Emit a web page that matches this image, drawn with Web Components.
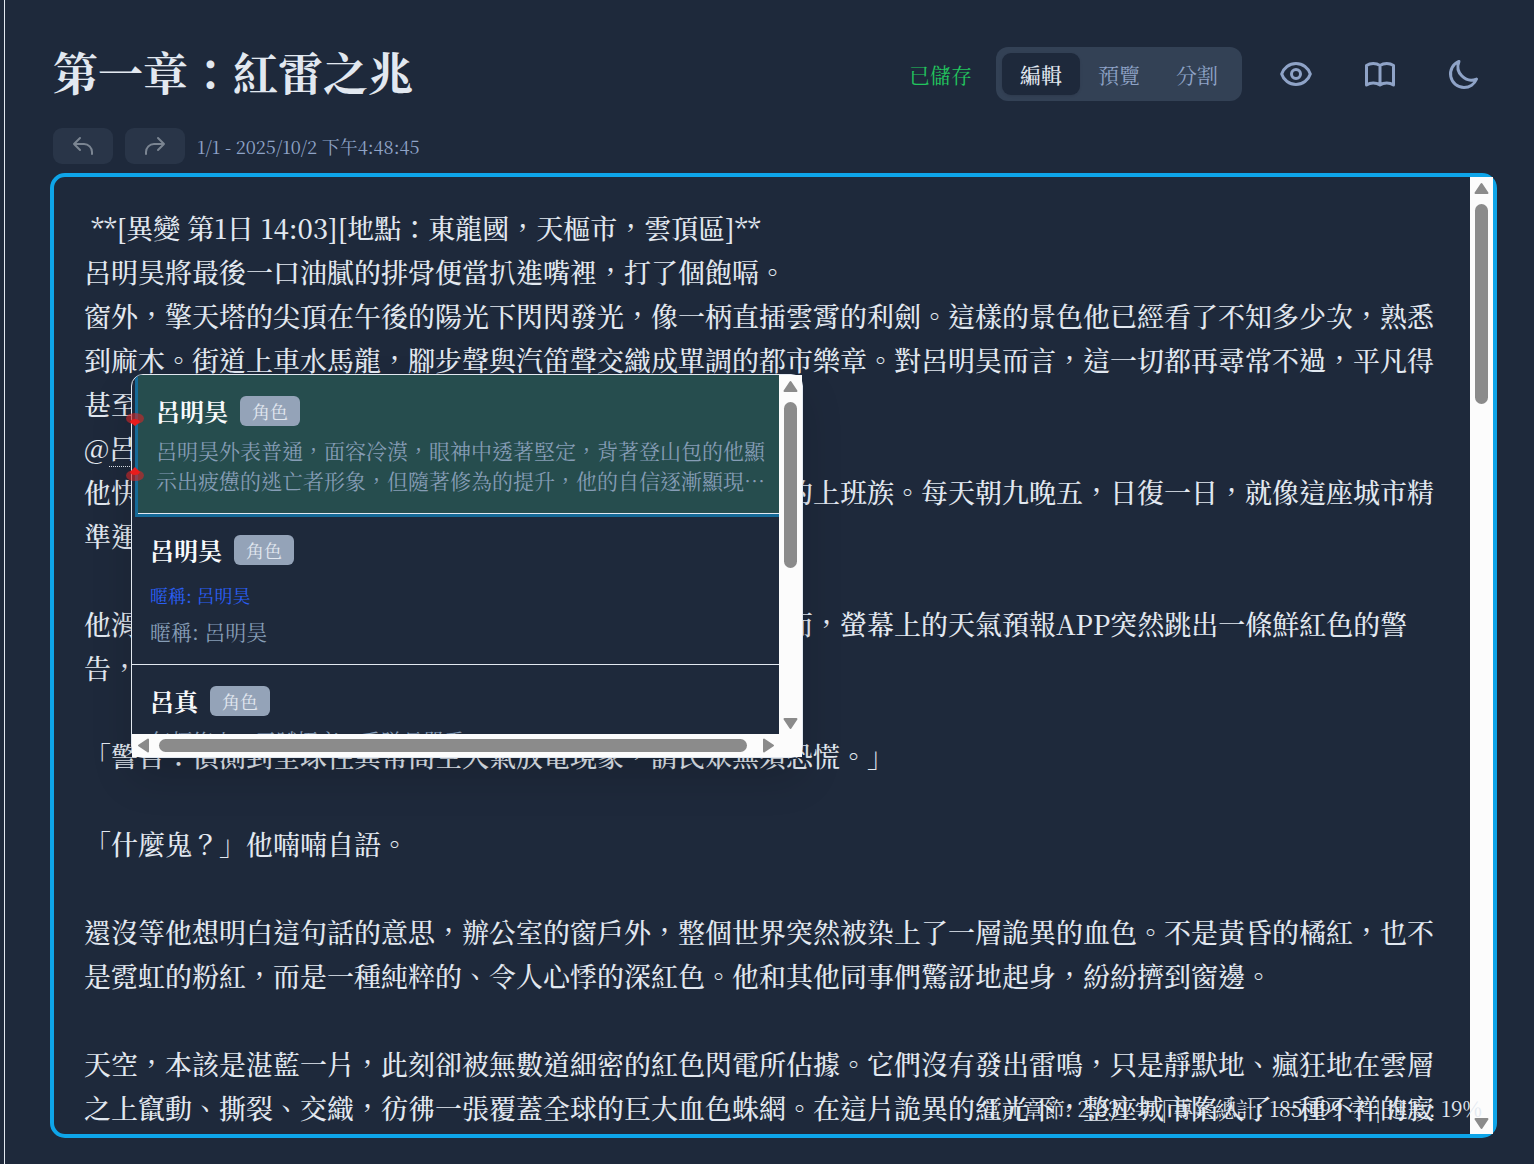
<!DOCTYPE html>
<html lang="zh-Hant">
<head>
<meta charset="utf-8">
<meta name="viewport" content="width=device-width, initial-scale=1">
<title>第一章:紅雷之兆</title>
<style>
    :root {
        --bg: #1e293b;
        --surface: #334155;
        --text: #e2e8f0;
        --muted: #8fa3c7;
        --badge: #94a3b8;
        --accent: #0ea5e9;
        --rail: #fcfcfc;
        --thumb: #8b8b8b;
    }
    body {
        margin: 0;
        background: var(--bg);
        color: var(--text);
        font-family: 'Noto Serif CJK TC', 'Noto Serif TC', 'Liberation Serif', 'Noto Sans CJK TC', serif;
    }
</style>
</head>
<body>
<chapter-page>
    <chapter-header slot="header" heading="第一章：紅雷之兆" status="已儲存"></chapter-header>
    <history-bar slot="history">1/1 - 2025/10/2 下午4:48:45</history-bar>
    <chapter-editor>
        <mention-popup slot="popup">
            <mention-item selected name="呂明昊" kind="角色">呂明昊外表普通，面容冷漠，眼神中透著堅定，背著登山包的他顯示出疲憊的逃亡者形象，但隨著修為的提升，他的自信逐漸顯現…</mention-item>
            <mention-item name="呂明昊" kind="角色" nickname="暱稱: 呂明昊">暱稱: 呂明昊</mention-item>
            <mention-item name="呂真" kind="角色">年輕修士，天賦極高，受隊長器重</mention-item>
        </mention-popup>
        <span slot="stats">當前章節: 2,031 字 | 專案總計: 185,199 字 | 進度: 19%</span>
    </chapter-editor>
</chapter-page>

<script>
/**
 * Small helper, attaches an open shadow root with the given markup
 */
function render(element, html) {
    element.attachShadow({ mode: 'open' }).innerHTML = html;
}

class ChapterPage extends HTMLElement {
    constructor() {
        super();
        render(this, `
            <style>
                :host {
                    box-sizing: border-box;
                    display: flex;
                    flex-direction: column;
                    min-height: 100vh;
                    margin-left: 4px;
                    padding: 47px 40px 26px 48px;
                    border-left: 1px solid var(--text);
                }
                slot[name="history"] {
                    display: block;
                    margin: 27px 0 9px;
                }
            </style>
            <slot name="header"></slot>
            <slot name="history"></slot>
            <slot></slot>
        `);
    }
}

class ChapterHeader extends HTMLElement {
    constructor() {
        super();
        render(this, `
            <style>
                :host {
                    display: flex;
                    align-items: flex-start;
                    justify-content: space-between;
                }
                h1 {
                    margin: 0;
                    font-size: 45px;
                    line-height: 50px;
                    font-weight: 700;
                }
                .actions {
                    display: flex;
                    align-items: center;
                    gap: 24px;
                }
                .status {
                    color: #22c55e;
                    font-size: 21px;
                    line-height: 30px;
                }
                .modes {
                    display: flex;
                    padding: 6px;
                    border-radius: 12px;
                    background: var(--surface);
                }
                button {
                    border: 0;
                    padding: 0;
                    background: none;
                    color: var(--muted);
                    font: inherit;
                    cursor: pointer;
                }
                .modes button {
                    padding: 6px 18px;
                    border-radius: 9px;
                    font-size: 21px;
                    line-height: 30px;
                }
                .modes button[aria-pressed="true"] {
                    background: var(--bg);
                    color: var(--text);
                    font-weight: 500;
                    box-shadow: 0 1px 3px rgba(0, 0, 0, 0.1);
                }
                .icon {
                    display: flex;
                    padding: 9px 12px;
                }
                svg {
                    width: 36px;
                    height: 36px;
                    fill: none;
                    stroke: currentColor;
                    stroke-width: 2;
                    stroke-linecap: round;
                    stroke-linejoin: round;
                }
            </style>
            <h1></h1>
            <div class="actions">
                <span class="status"></span>
                <div class="modes">
                    <button type="button" aria-pressed="true">編輯</button>
                    <button type="button" aria-pressed="false">預覽</button>
                    <button type="button" aria-pressed="false">分割</button>
                </div>
                <button type="button" class="icon" aria-label="專注模式">
                    <svg viewBox="0 0 24 24"><path d="M15 12a3 3 0 11-6 0 3 3 0 016 0z"/><path d="M2.458 12C3.732 7.943 7.523 5 12 5c4.478 0 8.268 2.943 9.542 7-1.274 4.057-5.064 7-9.542 7-4.477 0-8.268-2.943-9.542-7z"/></svg>
                </button>
                <button type="button" class="icon" aria-label="閱讀模式">
                    <svg viewBox="0 0 24 24"><path d="M12 6.253v13m0-13C10.832 5.477 9.246 5 7.5 5S4.168 5.477 3 6.253v13C4.168 18.477 5.754 18 7.5 18s3.332.477 4.5 1.253m0-13C13.168 5.477 14.754 5 16.5 5c1.747 0 3.332.477 4.5 1.253v13C19.832 18.477 18.247 18 16.5 18c-1.746 0-3.332.477-4.5 1.253"/></svg>
                </button>
                <button type="button" class="icon" aria-label="深色模式">
                    <svg viewBox="0 0 24 24"><path d="M20.354 15.354A9 9 0 018.646 3.646 9.003 9.003 0 0012 21a9.003 9.003 0 008.354-5.646z"/></svg>
                </button>
            </div>
        `);
    }

    connectedCallback() {
        this.shadowRoot.querySelector('h1').textContent = this.getAttribute('heading');
        this.shadowRoot.querySelector('.status').textContent = this.getAttribute('status');
    }
}

class HistoryBar extends HTMLElement {
    constructor() {
        super();
        render(this, `
            <style>
                :host {
                    display: flex;
                    align-items: center;
                    gap: 12px;
                    color: var(--muted);
                    font-size: 18px;
                    line-height: 24px;
                }
                button {
                    display: flex;
                    padding: 6px 18px;
                    border: 0;
                    border-radius: 9px;
                    background: #293548;
                    color: #7b8592;
                }
                svg {
                    width: 24px;
                    height: 24px;
                    fill: none;
                    stroke: currentColor;
                    stroke-width: 2;
                    stroke-linecap: round;
                    stroke-linejoin: round;
                }
            </style>
            <button type="button" disabled aria-label="復原">
                <svg viewBox="0 0 24 24"><path d="M3 10h10a8 8 0 018 8v2M3 10l6 6m-6-6l6-6"/></svg>
            </button>
            <button type="button" disabled aria-label="重做">
                <svg viewBox="0 0 24 24"><path d="M21 10H11a8 8 0 00-8 8v2m18-10l-6 6m6-6l-6-6"/></svg>
            </button>
            <span><slot></slot></span>
        `);
    }
}

/**
 * Scroll bar, vertical unless it has the horizontal attribute.
 * The thumb length comes from --thumb-size.
 */
class ScrollRail extends HTMLElement {
    constructor() {
        super();
        render(this, `
            <style>
                :host {
                    display: flex;
                    flex-direction: column;
                    width: 23px;
                    background: var(--rail);
                }
                :host([horizontal]) {
                    flex-direction: row;
                    width: auto;
                    height: 23px;
                }
                svg {
                    flex: none;
                    width: 23px;
                    height: 23px;
                    fill: var(--thumb);
                    stroke: var(--thumb);
                    stroke-width: 2;
                    stroke-linejoin: round;
                }
                .track {
                    flex: 1;
                    margin: 4px 5px;
                }
                .thumb {
                    height: var(--thumb-size);
                    border-radius: 7px;
                    background: var(--thumb);
                }
                :host([horizontal]) .track {
                    margin: 5px 4px;
                }
                :host([horizontal]) .thumb {
                    width: var(--thumb-size);
                    height: 13px;
                }
                :host([horizontal]) svg {
                    transform: rotate(-90deg);
                }
            </style>
            <svg viewBox="0 0 23 23"><path d="M11.5 7L17.500 16H5.500z"/></svg>
            <div class="track"><div class="thumb"></div></div>
            <svg viewBox="0 0 23 23"><path d="M11.5 17L17.500 8H5.500z"/></svg>
        `);
    }
}

class MentionItem extends HTMLElement {
    constructor() {
        super();
        render(this, `
            <style>
                :host {
                    display: block;
                    padding: 18px;
                    border-bottom: 1px solid var(--text);
                }
                :host([selected]) {
                    margin: 0 -6px 0 6px;
                    background: #264d4e;
                    box-shadow: 0 0 0 3px #156a98;
                }
                .top {
                    display: flex;
                    align-items: center;
                    gap: 12px;
                    height: 36px;
                }
                .name {
                    color: #f8fafc;
                    font-size: 24px;
                    line-height: 36px;
                    font-weight: 700;
                }
                .kind {
                    padding: 0 12px;
                    border-radius: 6px;
                    background: var(--badge);
                    font-size: 18px;
                    line-height: 30px;
                }
                .nickname {
                    margin-top: 12px;
                    color: #2a5ff5;
                    font-size: 18px;
                    line-height: 30px;
                }
                .nickname:empty {
                    display: none;
                }
                .description {
                    margin-top: 6px;
                    color: #869db6;
                    font-size: 21px;
                    line-height: 30px;
                }
            </style>
            <div class="top">
                <span class="name"></span>
                <span class="kind"></span>
            </div>
            <div class="nickname"></div>
            <div class="description"><slot></slot></div>
        `);
    }

    connectedCallback() {
        this.setAttribute('role', 'option');
        this.setAttribute('aria-selected', this.hasAttribute('selected'));
        for (const name of ['name', 'kind', 'nickname']) {
            this.shadowRoot.querySelector(`.${name}`).textContent = this.getAttribute(name) || '';
        }
    }
}

class MentionPopup extends HTMLElement {
    constructor() {
        super();
        render(this, `
            <style>
                :host {
                    position: absolute;
                    top: 197px;
                    left: 77px;
                    box-sizing: border-box;
                    display: grid;
                    grid-template: 1fr 23px / 1fr 23px;
                    width: 672px;
                    height: 384px;
                    border: 1px solid var(--text);
                    border-radius: 12px;
                    background: var(--bg);
                    box-shadow: 0 20px 40px rgba(0, 0, 0, 0.15);
                }
                .list {
                    min-height: 0;
                    overflow: hidden;
                    border-top-left-radius: 11px;
                }
                .down {
                    --thumb-size: 166px;
                }
                .across {
                    --thumb-size: 588px;
                }
                .corner {
                    background: var(--rail);
                }
                /* the two red caret handles on the left edge */
                .handles {
                    position: absolute;
                    top: 36px;
                    left: -6px;
                    width: 20px;
                    height: 72px;
                }
            </style>
            <div class="list" role="listbox" aria-label="角色"><slot></slot></div>
            <scroll-rail class="down"></scroll-rail>
            <scroll-rail class="across" horizontal></scroll-rail>
            <div class="corner"></div>
            <svg class="handles" viewBox="0 0 20 72">
                <g fill="#d32626" fill-opacity="0.6">
                    <ellipse cx="9" cy="7.500" rx="9" ry="5.500"/>
                    <ellipse cx="9" cy="64.500" rx="9" ry="5.500"/>
                </g>
                <g fill="#e81c1c">
                    <path d="M4 11q1-3 5-3t5 3l-5 4z"/>
                    <path d="M4 61q1 3 5 3t5-3l-5-5z"/>
                </g>
            </svg>
        `);
    }
}

class ChapterEditor extends HTMLElement {
    constructor() {
        super();
        render(this, `
            <style>
                :host {
                    position: relative;
                    flex: 1;
                    display: flex;
                    margin: 0 -3px;
                    border: 4px solid var(--accent);
                    border-radius: 15px;
                }
                textarea {
                    flex: 1;
                    min-width: 0;
                    padding: 29px 30px;
                    border: 0;
                    outline: 0;
                    overflow: hidden;
                    resize: none;
                    background: none;
                    color: inherit;
                    font: inherit;
                    font-size: 27px;
                    line-height: 44px;
                    font-weight: 500;
                }
                scroll-rail {
                    --thumb-size: 200px;
                }
                /* marks the mention that is being typed */
                .composing {
                    position: absolute;
                    top: 289px;
                    left: 55px;
                    width: 81px;
                    border-top: 1px dotted var(--text);
                }
                .stats {
                    position: absolute;
                    right: 11px;
                    bottom: 11px;
                    font-size: 21px;
                    line-height: 30px;
                    white-space: nowrap;
                }
            </style>
            <textarea aria-label="章節內容" spellcheck="false"> **[異變 第1日 14:03][地點：東龍國，天樞市，雲頂區]**
呂明昊將最後一口油膩的排骨便當扒進嘴裡，打了個飽嗝。
窗外，擎天塔的尖頂在午後的陽光下閃閃發光，像一柄直插雲霄的利劍。這樣的景色他已經看了不知多少次，熟悉到麻木。街道上車水馬龍，腳步聲與汽笛聲交織成單調的都市樂章。對呂明昊而言，這一切都再尋常不過，平凡得甚至有些乏味。
@呂
他快三十歲了，沒車沒房沒存款，只是個在辦公室裡最普通的上班族。每天朝九晚五，日復一日，就像這座城市精準運轉的齒輪。

他滑開手機，想看看下班時會不會下雨，好決定帶把傘。然而，螢幕上的天氣預報APP突然跳出一條鮮紅色的警告，伴隨著刺耳的提示音。

「警告：偵測到全球性異常高空大氣放電現象，請民眾無須恐慌。」

「什麼鬼？」他喃喃自語。

還沒等他想明白這句話的意思，辦公室的窗戶外，整個世界突然被染上了一層詭異的血色。不是黃昏的橘紅，也不是霓虹的粉紅，而是一種純粹的、令人心悸的深紅色。他和其他同事們驚訝地起身，紛紛擠到窗邊。

天空，本該是湛藍一片，此刻卻被無數道細密的紅色閃電所佔據。它們沒有發出雷鳴，只是靜默地、瘋狂地在雲層之上竄動、撕裂、交織，彷彿一張覆蓋全球的巨大血色蛛網。在這片詭異的紅光下，整座城市陷入了一種不祥的寂靜。</textarea>
            <span class="composing"></span>
            <scroll-rail></scroll-rail>
            <div class="stats"><slot name="stats"></slot></div>
            <slot name="popup"></slot>
        `);
    }
}

customElements.define('scroll-rail', ScrollRail);
customElements.define('mention-item', MentionItem);
customElements.define('mention-popup', MentionPopup);
customElements.define('chapter-editor', ChapterEditor);
customElements.define('history-bar', HistoryBar);
customElements.define('chapter-header', ChapterHeader);
customElements.define('chapter-page', ChapterPage);
</script>
</body>
</html>
